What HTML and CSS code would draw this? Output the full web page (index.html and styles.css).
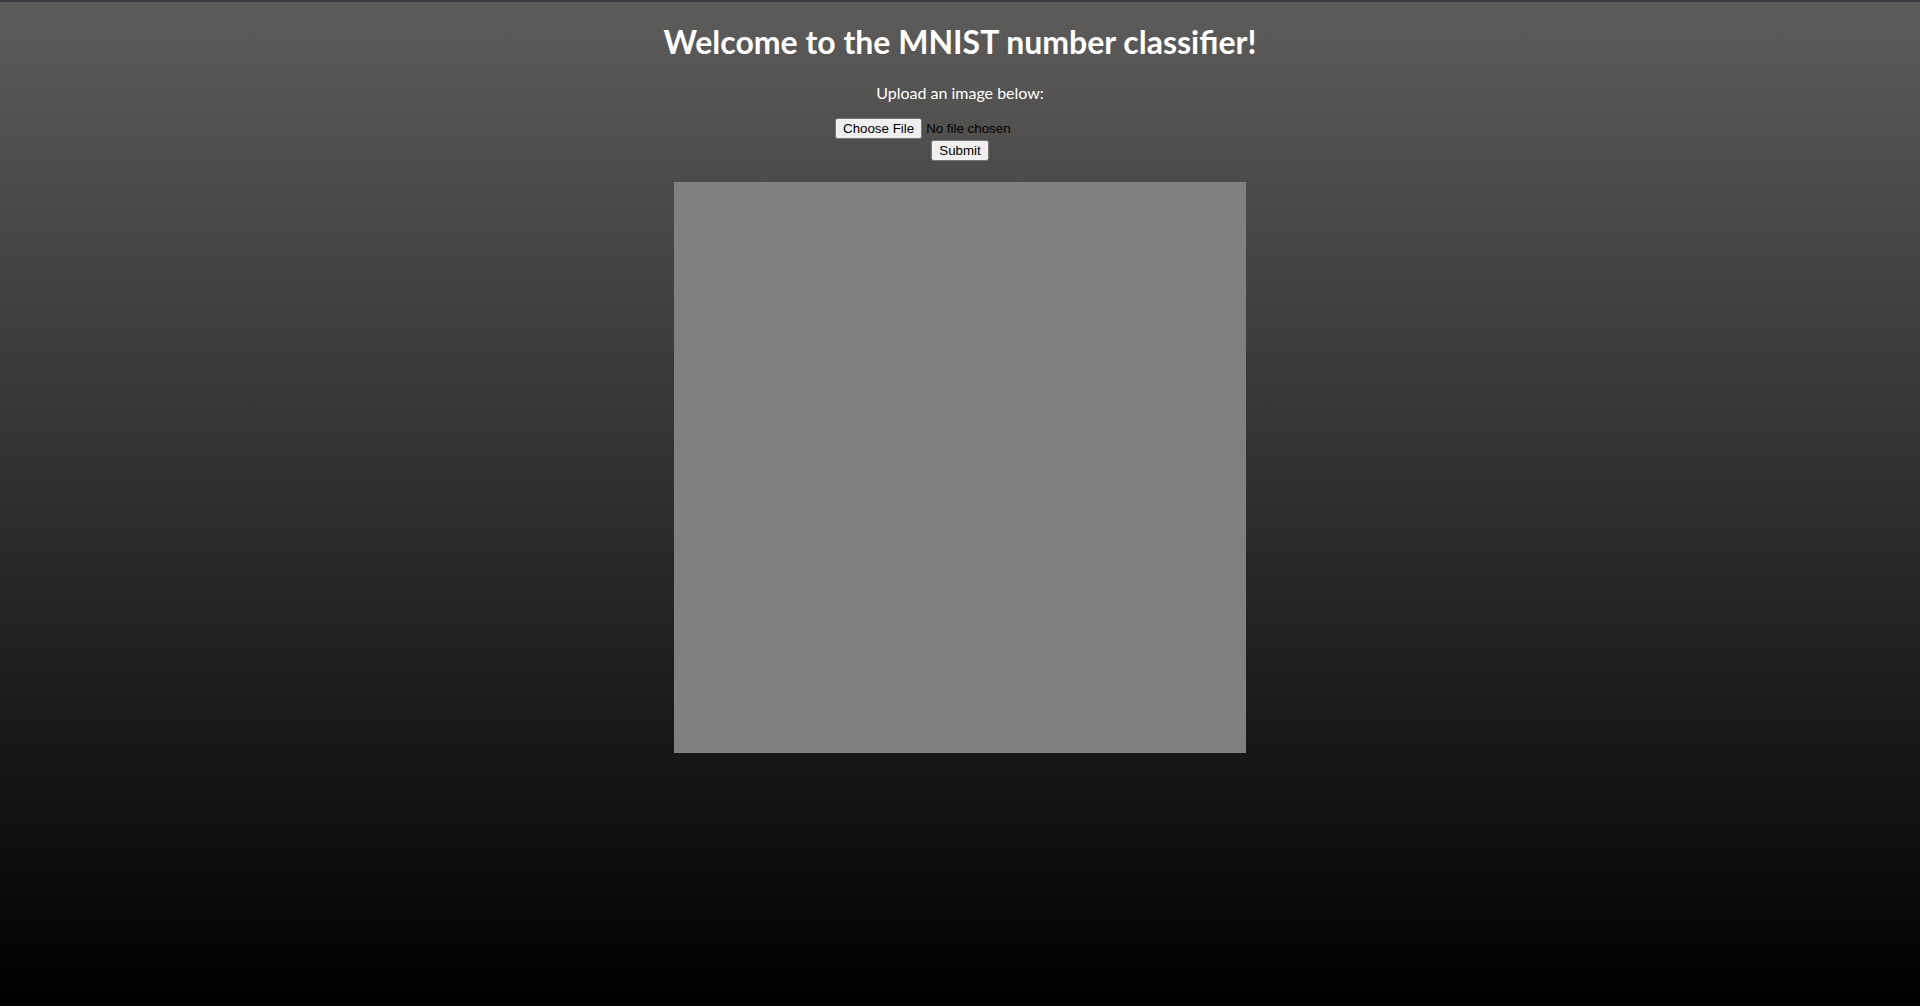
FILE: index.html
```html
<!DOCTYPE html>
<html>
<head>
<meta charset="utf-8">
<title>MNIST classifier</title>
<link rel="stylesheet" href="styles.css">
</head>
<body>
<div class="topline"></div>
<main class="page">
  <h1 class="title">Welcome to the MNIST number classifier!</h1>
  <p class="subtitle">Upload an image below:</p>
  <form class="upload">
    <input class="file" type="file" name="image">
    <input class="submit" type="submit" value="Submit">
  </form>
  <div class="canvas"></div>
</main>
</body>
</html>
```

FILE: styles.css
```css
html, body {
  margin: 0;
  height: 100%;
}
body {
  background: linear-gradient(to bottom, #5d5c5a 0%, #000000 100%);
  font-family: Lato, "Noto Sans", sans-serif;
  color: #ffffff;
  overflow: hidden;
}
.topline {
  height: 2px;
  background: #383a40;
}
.page {
  display: flex;
  flex-direction: column;
  align-items: center;
}
.title {
  margin: 21px 0 0 0;
  font-size: 32px;
  font-weight: 700;
  line-height: 38px;
}
.subtitle {
  margin: 22px 0 0 0;
  font-size: 16px;
  line-height: 20px;
}
.upload {
  margin-top: 15px;
  display: flex;
  flex-direction: column;
  align-items: center;
  gap: 1px;
  font-family: "Liberation Sans", Arial, sans-serif;
  font-size: 13.33px;
}
.file {
  width: 250px;
  color: #000;
  font-family: "Liberation Sans", Arial, sans-serif;
  font-size: 13.33px;
}
.submit {
  font-family: "Liberation Sans", Arial, sans-serif;
  font-size: 13.33px;
}
.canvas {
  margin-top: 21px;
  width: 572px;
  height: 571px;
  background: #808080;
}
```
